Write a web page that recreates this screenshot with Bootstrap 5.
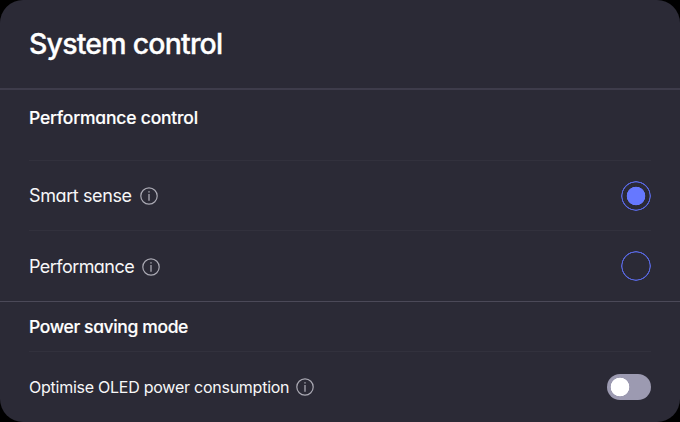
<!DOCTYPE html>
<html lang="en">
<head>
<meta charset="utf-8">
<meta name="viewport" content="width=device-width, initial-scale=1">
<title>System control</title>
<link href="https://cdn.jsdelivr.net/npm/bootstrap@5.3.0/dist/css/bootstrap.min.css" rel="stylesheet">
<style>
html, body { background: #000; }
body { font-family: Inter, "Liberation Sans", sans-serif; font-feature-settings: "cv11"; color: #f7f7f8; line-height: 1; }
.panel { height: 422px; background: #2b2a36; border-radius: 23px; }
.panel-head { height: 90px; padding: 1px 29px 0; border-bottom: 2px solid #3e3c4b; }
.panel-title { font-size: 28.5px; font-weight: 500; letter-spacing: -.8px; line-height: 1; color: #fff; -webkit-text-stroke: .3px #fff; }
.group { padding: 0 29px; }
.group + .group { border-top: 1px solid #4b4958; }
.group-title { font-size: 17.5px; font-weight: 500; letter-spacing: -.2px; line-height: 1; height: 70px; padding-top: 19px; color: #fff; -webkit-text-stroke: .15px #fff; }
.group-title.tight { height: 49px; padding-top: 16px; letter-spacing: -.37px; }
.setting { height: 70px; border-top: 1px solid #32313d; font-size: 18px; letter-spacing: -.4px; }
.setting.last { height: 71px; letter-spacing: -.55px; }
.setting.last label { padding-top: 1px; }
.setting.oled { font-size: 16px; letter-spacing: -.25px; }
.setting svg { margin: 1px 0 0 8px; }
.setting.oled svg { margin: 0 0 0 7px; }
.panel .form-check-input { margin: 0; float: none; background-color: transparent; box-shadow: none; }
.panel .pick { width: 30px; height: 30px; border: 0; background-image: radial-gradient(circle, transparent 13.3px, #5867e0 13.8px, #5867e0 14.5px, transparent 15px); background-size: auto; }
.panel .pick:checked { background-image: radial-gradient(circle, #6678ff 9px, transparent 9.6px, transparent 13.3px, #5867e0 13.8px, #5867e0 14.5px, transparent 15px); background-size: auto; }
.panel .toggle { width: 44px; height: 26px; border: 0; border-radius: 13px; background: #9c9ab1 radial-gradient(circle at 13px 13px, #fff 9px, transparent 9.6px); }
</style>
<script src="https://cdn.jsdelivr.net/npm/bootstrap@5.3.0/dist/js/bootstrap.bundle.min.js"></script>
</head>
<body>
<svg class="d-none"><symbol id="info" viewBox="0 0 18 18"><g fill="none" stroke="#aaa9b3"><circle cx="9" cy="9" r="8.2" stroke-width="1.2"/><path d="M9 6.9V13.7" stroke-width="1.3"/><path d="M9 4.2V5.6" stroke-width="1.4"/></g></symbol></svg>
<main class="panel overflow-hidden">
  <header class="panel-head d-flex align-items-center"><h1 class="panel-title m-0">System control</h1></header>
  <section class="group">
    <h2 class="group-title m-0">Performance control</h2>
    <div class="setting d-flex align-items-center">
      <label for="smart">Smart sense</label>
      <svg width="18" height="18"><use href="#info"/></svg>
      <input class="form-check-input pick ms-auto" type="radio" name="perf" id="smart" checked>
    </div>
    <div class="setting last d-flex align-items-center">
      <label for="perf">Performance</label>
      <svg width="18" height="18"><use href="#info"/></svg>
      <input class="form-check-input pick ms-auto" type="radio" name="perf" id="perf">
    </div>
  </section>
  <section class="group">
    <h2 class="group-title tight m-0">Power saving mode</h2>
    <div class="setting oled d-flex align-items-center">
      <label for="oled">Optimise OLED power consumption</label>
      <svg width="18" height="18"><use href="#info"/></svg>
      <input class="form-check-input toggle ms-auto" type="checkbox" role="switch" id="oled">
    </div>
  </section>
</main>
</body>
</html>
